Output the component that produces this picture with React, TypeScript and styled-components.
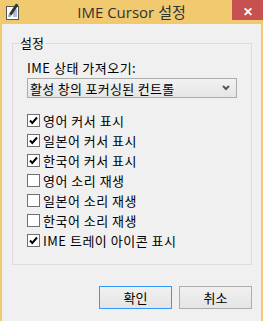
import styled, { createGlobalStyle } from 'styled-components'

const OPTIONS = [
	{ label: '영어 커서 표시', checked: true },
	{ label: '일본어 커서 표시', checked: true },
	{ label: '한국어 커서 표시', checked: true },
	{ label: '영어 소리 재생', checked: false },
	{ label: '일본어 소리 재생', checked: false },
	{ label: '한국어 소리 재생', checked: false },
	{ label: 'IME 트레이 아이콘 표시', checked: true },
]

const AppIcon = () => (
	<svg width="16" height="18" viewBox="0 0 16 18">
		<rect x="1.5" y="4.5" width="12" height="13" fill="#fff" stroke="#555" />
		<path d="M8 8h4M8 10h4M8 12h4M8 14h4M3 14h3" stroke="#5a7fb5" />
		<path d="M4 12 L11 1.5 L13.5 3 L6.5 13.5 Z" fill="#333" />
		<path d="M4 12 L3.5 15 L6.5 13.5 Z" fill="#999" />
	</svg>
)

const CheckMark = () => (
	<svg width="11" height="11" viewBox="0 0 11 11">
		<path d="M2 5.5 L4.3 8 L9 2.5" fill="none" stroke="#000" strokeWidth="2" />
	</svg>
)

const Chevron = () => (
	<svg width="8" height="6" viewBox="0 0 8 6">
		<path d="M1 1 L4 4 L7 1" fill="none" stroke="#555" strokeWidth="2" />
	</svg>
)

export default function App() {
	return (
		<>
			<GlobalStyle />
			<Window>
				<TitleBar>
					<IconCell>
						<AppIcon />
					</IconCell>
					<Title>IME Cursor 설정</Title>
					<CloseButton>✕</CloseButton>
				</TitleBar>
				<Client>
					<Group>
						<Legend>설정</Legend>
						<FieldLabel>IME 상태 가져오기:</FieldLabel>
						<Combo>
							<span>활성 창의 포커싱된 컨트롤</span>
							<Chevron />
						</Combo>
						<CheckList>
							{OPTIONS.map((opt) => (
								<CheckRow key={opt.label}>
									<Box>{opt.checked && <CheckMark />}</Box>
									<span>{opt.label}</span>
								</CheckRow>
							))}
						</CheckList>
					</Group>
					<Buttons>
						<Button $primary>확인</Button>
						<Button>취소</Button>
					</Buttons>
				</Client>
			</Window>
		</>
	)
}

const GlobalStyle = createGlobalStyle`
	html, body {
		margin: 0;
		padding: 0;
	}
	body {
		font-family: "Noto Sans CJK KR", sans-serif;
	}
`

const Window = styled.div`
	width: 263px;
	height: 321px;
	background: #f1c96f;
	display: flex;
	flex-direction: column;
	overflow: hidden;
`

const TitleBar = styled.div`
	height: 24px;
	display: grid;
	grid-template-columns: 1fr auto 1fr;
	align-items: center;
`

const IconCell = styled.div`
	display: flex;
	padding-left: 5px;
	padding-bottom: 2px;
`

const Title = styled.div`
	font-family: "Open Sans", "Noto Sans CJK KR", sans-serif;
	font-size: 15px;
	color: #333;
	line-height: 20px;
`

const CloseButton = styled.div`
	justify-self: end;
	align-self: start;
	width: 31px;
	height: 20px;
	background: #c75050;
	color: #fff;
	font-size: 12px;
	font-weight: bold;
	display: flex;
	align-items: center;
	justify-content: center;
`

const Client = styled.div`
	flex: 1;
	margin: 0 2px 0 2px;
	background: #f0f0f0;
	padding: 11px 9px 0 10px;
	font-size: 12px;
	color: #000;
`

const Group = styled.fieldset`
	margin: 0;
	border: 1px solid #dcdcdc;
	padding: 9px 14px 14px 14px;
	min-inline-size: 0;
`

const Legend = styled.legend`
	margin-left: -8px;
	padding: 0 1px;
	font-size: 13px;
	line-height: 16px;
`

const FieldLabel = styled.div`
	font-size: 13px;
	line-height: 16px;
	letter-spacing: 0.5px;
	margin-bottom: 2px;
`

const Combo = styled.div`
	box-sizing: border-box;
	height: 20px;
	border: 1px solid #acacac;
	background: linear-gradient(#f2f2f2, #e5e5e5);
	display: flex;
	align-items: center;
	justify-content: space-between;
	padding: 0 6px 0 2px;
	font-size: 13px;
	letter-spacing: 0.3px;
`

const CheckList = styled.div`
	margin-top: 12px;
	display: flex;
	flex-direction: column;
`

const CheckRow = styled.div`
	height: 20px;
	display: flex;
	align-items: center;
	gap: 3px;
	font-size: 13px;
	letter-spacing: 0.5px;
`

const Box = styled.div`
	box-sizing: border-box;
	width: 13px;
	height: 13px;
	border: 1px solid #707070;
	background: #fff;
	display: flex;
	align-items: center;
	justify-content: center;
`

const Buttons = styled.div`
	display: flex;
	justify-content: flex-end;
	gap: 7px;
	margin-top: 21px;
`

const Button = styled.div<{ $primary?: boolean }>`
	box-sizing: border-box;
	width: 73px;
	height: 23px;
	border: 1px solid ${(p) => (p.$primary ? '#3399ff' : '#acacac')};
	background: linear-gradient(#f0f0f0, #e5e5e5);
	display: flex;
	align-items: center;
	justify-content: center;
	font-size: 13px;
`
